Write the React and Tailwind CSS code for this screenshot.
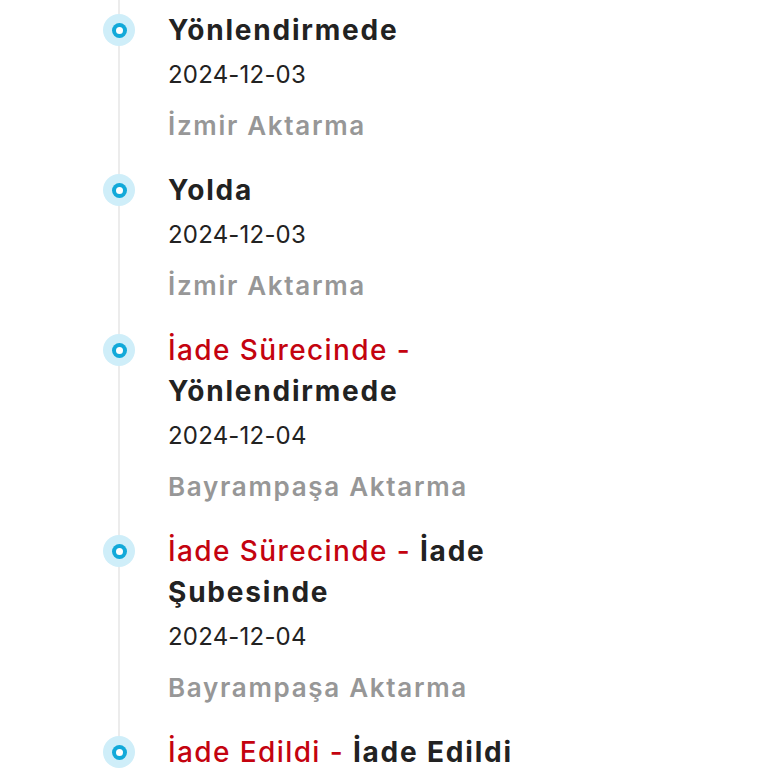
import React from "react";

const events = [
  { status: null, title: "Yönlendirmede", date: "2024-12-03", place: "İzmir Aktarma" },
  { status: null, title: "Yolda", date: "2024-12-03", place: "İzmir Aktarma" },
  { status: "İade Sürecinde", title: "Yönlendirmede", date: "2024-12-04", place: "Bayrampaşa Aktarma" },
  { status: "İade Sürecinde", title: "İade Şubesinde", date: "2024-12-04", place: "Bayrampaşa Aktarma" },
  { status: "İade Edildi", title: "İade Edildi", date: "2024-12-05", place: "Bayrampaşa Aktarma" },
];

function Dot() {
  return (
    <span className="absolute left-[-17px] top-[4px] flex h-8 w-8 items-center justify-center rounded-full bg-[#cfeef9]">
      <span className="flex h-[15px] w-[15px] items-center justify-center rounded-full bg-[#12a9d9]">
        <span className="h-[7px] w-[7px] rounded-full bg-white" />
      </span>
    </span>
  );
}

export default function App() {
  return (
    <div
      className="h-[768px] w-[768px] overflow-hidden bg-white"
      style={{ fontFamily: "Inter, 'Noto Sans', sans-serif" }}
    >
      <ul className="ml-[118px] border-l-2 border-[#ececec] pt-[10px]">
        {events.map((e, i) => (
          <li key={i} className="relative pb-[17px] pl-[48px]">
            <Dot />
            <div className="w-[400px] text-[28px] font-bold leading-[41px] tracking-[1.8px] text-[#222]">
              {e.status && (
                <span className="font-medium tracking-[1.4px] text-[#c4030f]">{e.status} - </span>
              )}
              {e.title}
            </div>
            <div className="text-[24px] leading-[47px] tracking-[0.2px] text-[#222]">{e.date}</div>
            <div className="text-[26px] font-semibold leading-[55px] tracking-[1.7px] text-[#979797]">
              {e.place}
            </div>
          </li>
        ))}
      </ul>
    </div>
  );
}
